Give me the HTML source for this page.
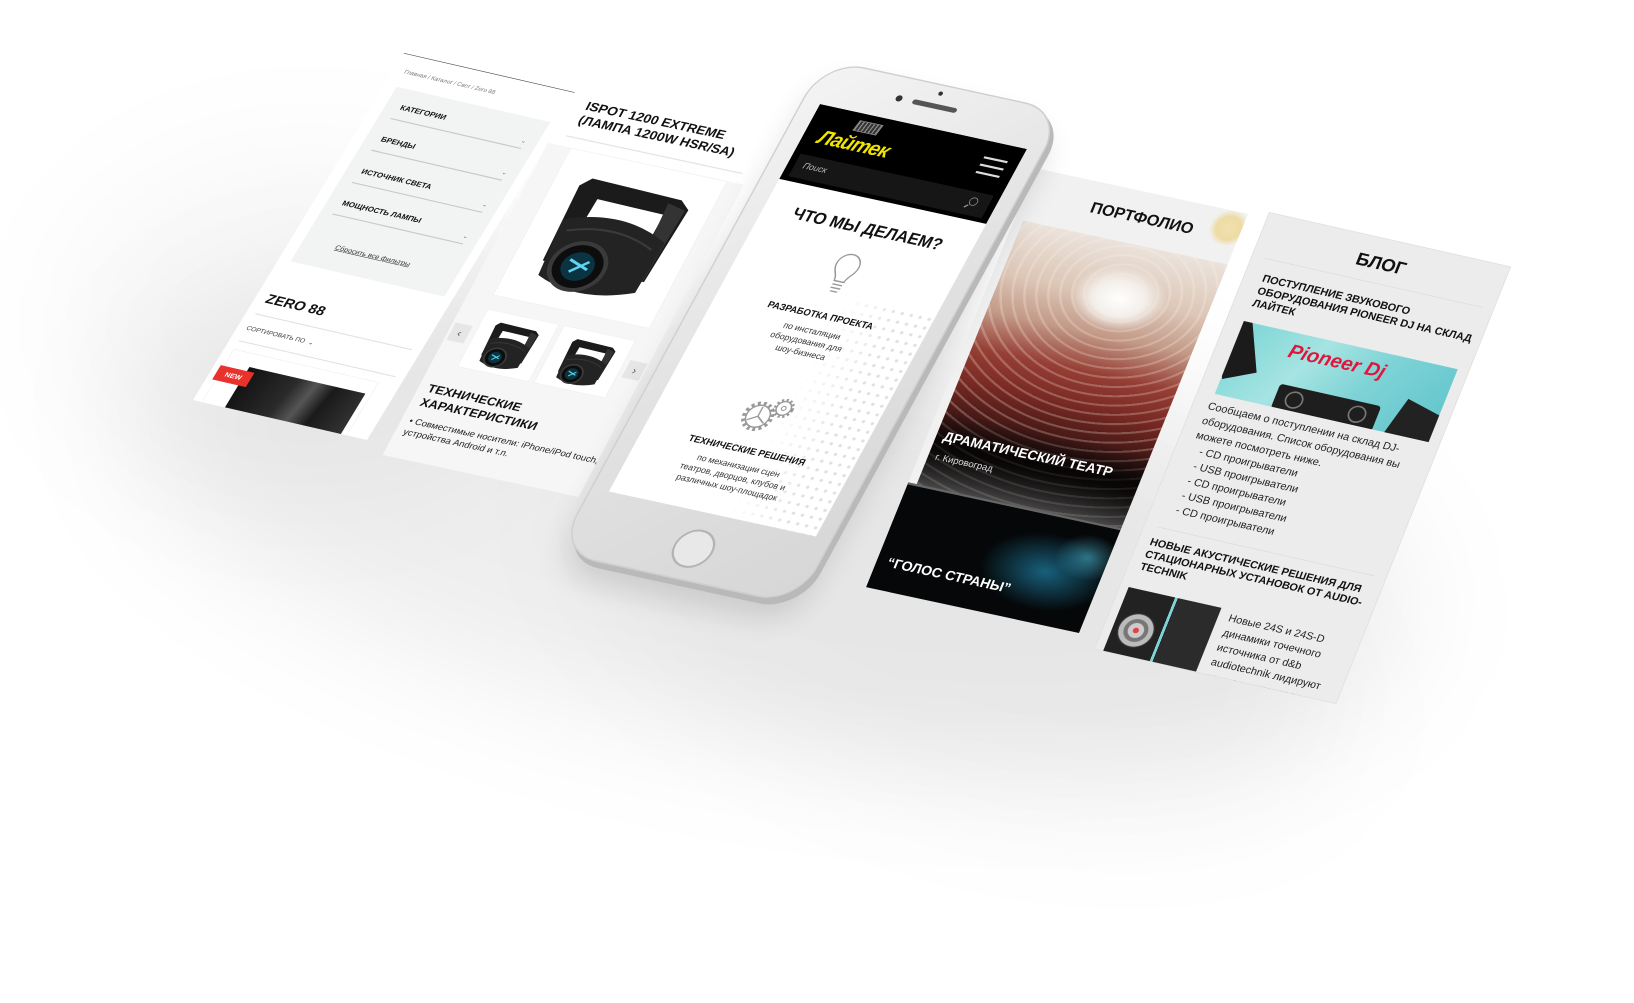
<!DOCTYPE html>
<html><head><meta charset="utf-8">
<style>
*{margin:0;padding:0;box-sizing:border-box}
html,body{width:1634px;height:1003px;overflow:hidden;background:#fff}
body{position:relative;font-family:"Liberation Sans Narrow","Liberation Sans",sans-serif;color:#111}
.p{position:absolute;left:0;top:0;transform-origin:0 0;overflow:hidden}
.a{position:absolute}
.b{font-weight:bold;text-transform:uppercase}
.shadow{position:absolute;border-radius:50%;filter:blur(60px)}
</style></head><body>

<svg width="0" height="0" style="position:absolute">
<defs>
<symbol id="head" viewBox="0 0 200 220">
<path d="M38 28 L165 32 L180 44 L172 160 L150 160 L152 58 L58 56 L52 160 L30 160 L26 42 Z" fill="#1b1b1b"/>
<path d="M150 40 L176 46 L170 160 L156 160 Z" fill="#333"/>
<path d="M28 95 Q100 62 172 98 L168 178 Q100 210 34 182 Z" fill="#232323"/>
<path d="M40 110 Q100 85 160 112" stroke="#3a3a3a" stroke-width="3" fill="none"/>
<circle cx="78" cy="158" r="36" fill="#0d0d0d" stroke="#3a3a3a" stroke-width="6"/>
<circle cx="78" cy="158" r="22" fill="#0b3442"/>
<path d="M64 150 L92 160 M70 168 L90 148" stroke="#5fd4ee" stroke-width="4"/>
</symbol>
</defs>
</svg>

<!-- background shadows -->
<div class="shadow" style="left:120px;top:280px;width:1300px;height:460px;background:rgba(0,0,0,.065);transform:rotate(10deg)"></div>
<div class="shadow" style="left:560px;top:430px;width:800px;height:360px;background:rgba(0,0,0,.035);transform:rotate(18deg)"></div>
<div class="shadow" style="left:60px;top:150px;width:500px;height:350px;background:rgba(0,0,0,.03)"></div>

<!-- Panel 1: catalog -->
<div class="p" style="width:300px;height:680px;background:#fff;border-top:1.5px solid #444;transform:matrix(0.58,0.1333,-0.3103,0.5103,404,53)">
  <div class="a" style="left:18px;top:26px;font-size:10px;color:#777">Главная / Каталог / Свет / Zero 88</div>
  <div class="a" style="left:20px;top:60px;width:265px;height:342px;background:#f2f3f3"></div>
  <div class="a b" style="left:45px;top:86px;font-size:13px">Категории</div>
  <div class="a" style="left:40px;top:116px;width:225px;border-top:2px solid #c9c9c9"></div>
  <div class="a" style="left:258px;top:98px;font-size:10px;color:#666">⌄</div>
  <div class="a b" style="left:45px;top:148px;font-size:13px">Бренды</div>
  <div class="a" style="left:40px;top:178px;width:225px;border-top:2px solid #c9c9c9"></div>
  <div class="a" style="left:258px;top:160px;font-size:10px;color:#666">⌄</div>
  <div class="a b" style="left:45px;top:211px;font-size:13px">Источник света</div>
  <div class="a" style="left:40px;top:241px;width:225px;border-top:2px solid #c9c9c9"></div>
  <div class="a" style="left:258px;top:223px;font-size:10px;color:#666">⌄</div>
  <div class="a b" style="left:45px;top:273px;font-size:13px">Мощность лампы</div>
  <div class="a" style="left:40px;top:303px;width:225px;border-top:2px solid #c9c9c9"></div>
  <div class="a" style="left:258px;top:285px;font-size:10px;color:#666">⌄</div>
  <div class="a" style="left:75px;top:353px;font-size:12px;text-decoration:underline;color:#333">Сбросить все фильтры</div>
  <div class="a b" style="left:18px;top:462px;font-size:24px">Zero 88</div>
  <div class="a" style="left:15px;top:505px;width:270px;border-top:2px solid #e2e2e2"></div>
  <div class="a b" style="left:15px;top:527px;font-size:11px;color:#444;font-weight:normal">Сортировать по &nbsp;⌄</div>
  <div class="a" style="left:15px;top:558px;width:270px;border-top:2px solid #e2e2e2"></div>
  <div class="a" style="left:15px;top:575px;width:250px;height:120px;border:1px solid #eee;background:#fff"></div>
  <div class="a" style="left:55px;top:600px;width:200px;height:90px;background:linear-gradient(100deg,#111 0%,#2a2a2a 40%,#555 55%,#1a1a1a 70%,#333 100%)"></div>
  <div class="a b" style="left:10px;top:608px;width:58px;height:28px;background:#e8322b;color:#fff;font-size:12px;line-height:28px;text-align:center">New</div>
</div>

<!-- Panel 2: product -->
<div class="p" style="width:300px;height:640px;background:#f6f6f6;transform:matrix(0.653,0.14,-0.306,0.578,578.5,85)">
  <div class="a" style="left:0;top:0;width:300px;height:100px;background:#fff"></div>
  <div class="a b" style="left:26px;top:18px;font-size:20px;line-height:24px;width:290px">iSpot 1200 Extreme (лампа 1200W HSR/SA)</div>
  <div class="a" style="left:20px;top:82px;width:270px;border-top:2px solid #e4e4e4"></div>
  <div class="a" style="left:35px;top:100px;width:240px;height:255px;background:#fff;border:1px solid #eee"></div>
  <svg class="a" style="left:45px;top:110px" width="220" height="240" viewBox="0 0 200 220"><use href="#head"/></svg>
  <div class="a" style="left:4px;top:410px;width:26px;height:30px;background:#e6e6e6;color:#666;font-size:18px;text-align:center;line-height:30px">‹</div>
  <div class="a" style="left:38px;top:378px;width:110px;height:100px;background:#fff;border:1px solid #eee"></div>
  <svg class="a" style="left:48px;top:383px" width="90" height="95" viewBox="0 0 200 220"><use href="#head"/></svg>
  <div class="a" style="left:155px;top:378px;width:110px;height:100px;background:#fff;border:1px solid #eee"></div>
  <svg class="a" style="left:163px;top:383px" width="95" height="95" viewBox="0 0 200 220"><use href="#head"/></svg>
  <div class="a" style="left:272px;top:410px;width:26px;height:30px;background:#e6e6e6;color:#666;font-size:18px;text-align:center;line-height:30px">›</div>
  <div class="a b" style="left:14px;top:510px;font-size:19px;line-height:24px">Технические<br>характеристики</div>
  <div class="a" style="left:12px;top:568px;font-size:14px;line-height:19px;width:300px;color:#222">• Совместимые носители: iPhone/iPod touch, устройства Android и т.п.</div>
</div>

<!-- Portfolio -->
<div class="p" style="width:300px;height:620px;background:#f1f1f1;transform:matrix(0.71,0.153,-0.2726,0.676,1035,168)">
  <div class="a" style="left:255px;top:0px;width:55px;height:50px;border-radius:50%;background:radial-gradient(circle,#f1e1b0 0%,#eedba4 45%,rgba(240,225,170,0) 70%)"></div>
  <div class="a b" style="left:0;top:24px;width:330px;text-align:center;font-size:22px">Портфолио</div>
  <div class="a" style="left:12px;top:75px;width:300px;height:390px;background:
    radial-gradient(ellipse 22% 12% at 55% 20%,#fff 0%,#f3eee9 55%,rgba(230,210,195,0) 100%),
    repeating-radial-gradient(ellipse 110% 70% at 55% 18%,rgba(255,240,230,.25) 0 3px,rgba(0,0,0,0) 4px 16px),
    linear-gradient(to bottom,#ebe3dc 0%,#dcc6b6 20%,#c39a88 34%,#963f35 48%,#7a2a24 60%,#4a1a17 72%,#1a1212 86%,#666 100%)"></div>
  <div class="a" style="left:12px;top:355px;width:300px;height:110px;background:linear-gradient(to bottom,rgba(0,0,0,0),rgba(0,0,0,.75) 40%,rgba(0,0,0,.3))"></div>
  <div class="a b" style="left:22px;top:382px;font-size:19px;color:#fff;white-space:nowrap">Драматический театр</div>
  <div class="a" style="left:22px;top:414px;font-size:13px;color:#ddd">г. Кировоград</div>
  <div class="a" style="left:0;top:465px;width:320px;height:160px;background:
    radial-gradient(ellipse 40% 50% at 70% 50%,rgba(40,170,220,.55),rgba(0,0,0,0) 70%),
    radial-gradient(ellipse 20% 30% at 85% 30%,rgba(90,210,240,.5),rgba(0,0,0,0) 70%),#050708;border-top:3px solid #666"></div>
  <div class="a b" style="left:15px;top:570px;font-size:19px;color:#fff;white-space:nowrap">“Голос страны”</div>
</div>

<!-- Blog -->
<div class="p" style="width:300px;height:570px;background:#ececec;border:1px solid #e0e0e0;transform:matrix(0.807,0.182,-0.307,0.7675,1269,212)">
  <div class="a b" style="left:0;top:18px;width:300px;text-align:center;font-size:22px">Блог</div>
  <div class="a" style="left:15px;top:55px;width:270px;border-top:1px solid #ddd"></div>
  <div class="a b" style="left:22px;top:72px;font-size:13px;line-height:16px;width:270px">Поступление звукового оборудования Pioneer DJ на склад Лайтек</div>
  <div class="a" style="left:20px;top:136px;width:265px;height:95px;background:linear-gradient(120deg,#7cd5d6 0%,#a6e4e2 35%,#7fd3d6 60%,#5fc5cc 100%);overflow:hidden">
    <div class="a" style="left:65px;top:10px;font-size:24px;font-weight:bold;font-style:italic;color:#e0173c;font-family:'Liberation Sans',sans-serif">Pioneer Dj</div>
    <div class="a" style="left:-15px;top:0;width:40px;height:70px;background:#1b1b1b;transform:rotate(-25deg)"></div>
    <div class="a" style="left:70px;top:65px;width:125px;height:32px;background:#1e1e1e;border-radius:4px"></div>
    <div class="a" style="left:82px;top:70px;width:22px;height:22px;border-radius:50%;border:2px solid #777"></div>
    <div class="a" style="left:160px;top:70px;width:22px;height:22px;border-radius:50%;border:2px solid #777"></div>
    <div class="a" style="left:215px;top:55px;width:55px;height:50px;background:#222;transform:rotate(15deg)"></div>
  </div>
  <div class="a" style="left:18px;top:237px;font-size:13px;line-height:19px;width:275px;color:#222">Сообщаем о поступлении на склад DJ-оборудования. Список оборудования вы можете посмотреть ниже.<br>&nbsp;&nbsp;&nbsp;- CD проигрыватели<br>&nbsp;&nbsp;&nbsp;- USB проигрыватели<br>&nbsp;&nbsp;&nbsp;- CD проигрыватели<br>&nbsp;&nbsp;&nbsp;- USB проигрыватели<br>&nbsp;&nbsp;&nbsp;- CD проигрыватели</div>
  <div class="a" style="left:15px;top:405px;width:270px;border-top:1px solid #ddd"></div>
  <div class="a b" style="left:14px;top:417px;font-size:13px;line-height:16px;width:285px">Новые акустические решения для стационарных установок от audio-technik</div>
  <div class="a" style="left:10px;top:485px;width:115px;height:90px;background:linear-gradient(90deg,#222 0 50%,#7fd3d6 50% 53%,#2b2b2b 53%)">
    <div class="a" style="left:6px;top:28px;width:44px;height:44px;border-radius:50%;background:radial-gradient(circle,#d44 0 3px,#ccc 4px 9px,#777 10px 14px,#bbb 15px 20px,#333 21px)"></div>
  </div>
  <div class="a" style="left:138px;top:485px;font-size:13px;line-height:19px;width:150px;color:#222">Новые 24S и 24S-D динамики точечного источника от d&amp;b audiotechnik лидируют по числу установок</div>
</div>

<!-- Phone -->
<div class="p" style="width:300px;height:580px;overflow:visible;transform:matrix(0.69,0.15,-0.364,0.668,820,104)">
  <div class="a" style="left:-18px;top:-56px;width:350px;height:742px;border-radius:58px;background:#b9b9b9;box-shadow:0 20px 40px rgba(0,0,0,.12)"></div>
  <div class="a" style="left:-26px;top:-62px;width:350px;height:740px;border-radius:58px;background:linear-gradient(135deg,#f4f4f4,#e2e2e2 50%,#d6d6d6);border:2px solid #cfcfcf"></div>
  <div class="a" style="left:118px;top:-34px;width:64px;height:7px;border-radius:4px;background:#555"></div>
  <div class="a" style="left:94px;top:-35px;width:9px;height:9px;border-radius:50%;background:#333"></div>
  <div class="a" style="left:146px;top:-52px;width:6px;height:6px;border-radius:50%;background:#333"></div>
  <div class="a" style="left:122px;top:604px;width:56px;height:56px;border-radius:50%;border:3px solid #b4b4b4;background:#e8e8e8"></div>
  <div class="a" style="left:0;top:0;width:300px;height:580px;background:#fff;overflow:hidden">
    <div class="a" style="left:0;top:0;width:300px;height:112px;background:#000"></div>
    <div class="a" style="left:62px;top:10px;width:34px;height:16px;background:repeating-linear-gradient(90deg,#888 0 2px,#333 2px 5px);border:1px solid #999;transform:skewX(-10deg)"></div>
    <div class="a" style="left:22px;top:28px;font-size:28px;font-weight:bold;font-style:italic;color:#f2e400;font-family:'Liberation Sans',sans-serif;letter-spacing:-1px">Лайтек</div>
    <div class="a" style="left:250px;top:22px;width:34px;height:3px;background:#ddd;box-shadow:0 11px 0 #ddd,0 22px 0 #ddd"></div>
    <div class="a" style="left:10px;top:72px;width:280px;height:34px;background:#161616"></div>
    <div class="a" style="left:22px;top:80px;font-size:12px;color:#bbb;font-style:italic">Поиск</div>
    <div class="a" style="left:262px;top:80px;width:12px;height:12px;border-radius:50%;border:1.5px solid #999"></div>
    <div class="a" style="left:258px;top:93px;width:6px;height:1.5px;background:#999;transform:rotate(-45deg)"></div>
    <div class="a" style="left:170px;top:250px;width:140px;height:330px;background-image:radial-gradient(circle,#e0e0e0 2px,rgba(0,0,0,0) 2.6px);background-size:13px 13px;-webkit-mask-image:linear-gradient(90deg,transparent,#000 60%);mask-image:linear-gradient(90deg,transparent,#000 60%)"></div>
    <div class="a b" style="left:0;top:140px;width:300px;text-align:center;font-size:23px">Что мы делаем?</div>
    <svg class="a" style="left:130px;top:190px" width="40" height="66" viewBox="0 0 40 66"><path d="M13 42 C13 33 4 29 4 18 A16 16 0 0 1 36 18 C36 29 27 33 27 42 Z" fill="none" stroke="#999" stroke-width="2"/><path d="M13 47H27M13 52H27M15 57H25" stroke="#999" stroke-width="2"/></svg>
    <div class="a b" style="left:0;top:275px;width:300px;text-align:center;font-size:13px">Разработка проекта</div>
    <div class="a" style="left:0;top:298px;width:300px;text-align:center;font-size:12px;line-height:16px;color:#333">по инсталяции<br>оборудования для<br>шоу-бизнеса</div>
    <svg class="a" style="left:112px;top:400px" width="80" height="60" viewBox="0 0 80 60"><circle cx="28" cy="36" r="16" fill="none" stroke="#999" stroke-width="2"/><circle cx="28" cy="36" r="19" fill="none" stroke="#999" stroke-width="5" stroke-dasharray="4 4"/><path d="M28 36L28 22M28 36L16 44M28 36L40 44" stroke="#999" stroke-width="2"/><circle cx="56" cy="18" r="10" fill="none" stroke="#999" stroke-width="2"/><circle cx="56" cy="18" r="12" fill="none" stroke="#999" stroke-width="4" stroke-dasharray="3 3"/><circle cx="56" cy="18" r="3" fill="none" stroke="#999" stroke-width="1.5"/></svg>
    <div class="a b" style="left:0;top:477px;width:300px;text-align:center;font-size:13px">Технические решения</div>
    <div class="a" style="left:0;top:500px;width:300px;text-align:center;font-size:12px;line-height:16px;color:#333">по механизации сцен<br>театров, дворцов, клубов и<br>различных шоу-площадок</div>
  </div>
</div>

</body></html>
